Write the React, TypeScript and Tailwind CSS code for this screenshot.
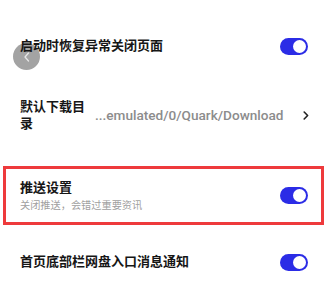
import React from 'react';

const FONT = { fontFamily: 'Roboto, "Noto Sans CJK SC", sans-serif' };

function Toggle() {
  return (
    <div className="w-[28px] h-[17px] rounded-full bg-[#2b2ce6] flex items-center justify-end pr-[2px]">
      <div className="w-[13px] h-[13px] rounded-full bg-white" />
    </div>
  );
}

export default function App() {
  return (
    <div className="relative w-[333px] h-[290px] bg-white overflow-hidden text-[#161616]" style={FONT}>
      {/* floating back button, sits under the first row's text */}
      <div className="absolute left-[13px] top-[43px] w-[27px] h-[27px] rounded-full bg-[#a3a3a3] flex items-center justify-center">
        <svg width="10" height="12" viewBox="0 0 10 12" fill="none">
          <path d="M6.5 2 L3 6 L6.5 10" stroke="#e6e6e6" strokeWidth="1.3" strokeLinecap="round" strokeLinejoin="round" />
        </svg>
      </div>

      <div className="relative flex flex-col pt-[11px]">
        {/* row 1 */}
        <div className="h-[70px] flex items-center justify-between pl-[20px] pr-[25px]">
          <span className="text-[13px] font-semibold">启动时恢复异常关闭页面</span>
          <Toggle />
        </div>

        {/* row 2 */}
        <div className="h-[68px] flex items-center pl-[20px] pr-[24px]">
          <span className="w-[66px] text-[13px] leading-[17px] font-semibold">默认下载目录</span>
          <span className="ml-[9px] flex-1 text-[13.6px] font-medium text-[#8c8c8c]">...emulated/0/Quark/Download</span>
          <svg width="6" height="9" viewBox="0 0 6 9" fill="none">
            <path d="M1.2 1 L4.6 4.5 L1.2 8" stroke="#222" strokeWidth="1.6" strokeLinecap="round" strokeLinejoin="round" />
          </svg>
        </div>

        {/* row 3, highlighted */}
        <div className="mt-[17px] ml-[3px] w-[321px] h-[59px] border-[3px] border-[#ee3a3c] flex items-center justify-between pl-[14px] pr-[13px]">
          <div className="flex flex-col">
            <span className="text-[13px] leading-[18px] font-semibold">推送设置</span>
            <span className="mt-[2px] text-[10.2px] leading-[14px] text-[#a0a0a0]">关闭推送，会错过重要资讯</span>
          </div>
          <Toggle />
        </div>

        {/* row 4 */}
        <div className="h-[74px] flex items-center justify-between pl-[20px] pr-[25px]">
          <span className="text-[13px] font-semibold">首页底部栏网盘入口消息通知</span>
          <Toggle />
        </div>
      </div>
    </div>
  );
}
